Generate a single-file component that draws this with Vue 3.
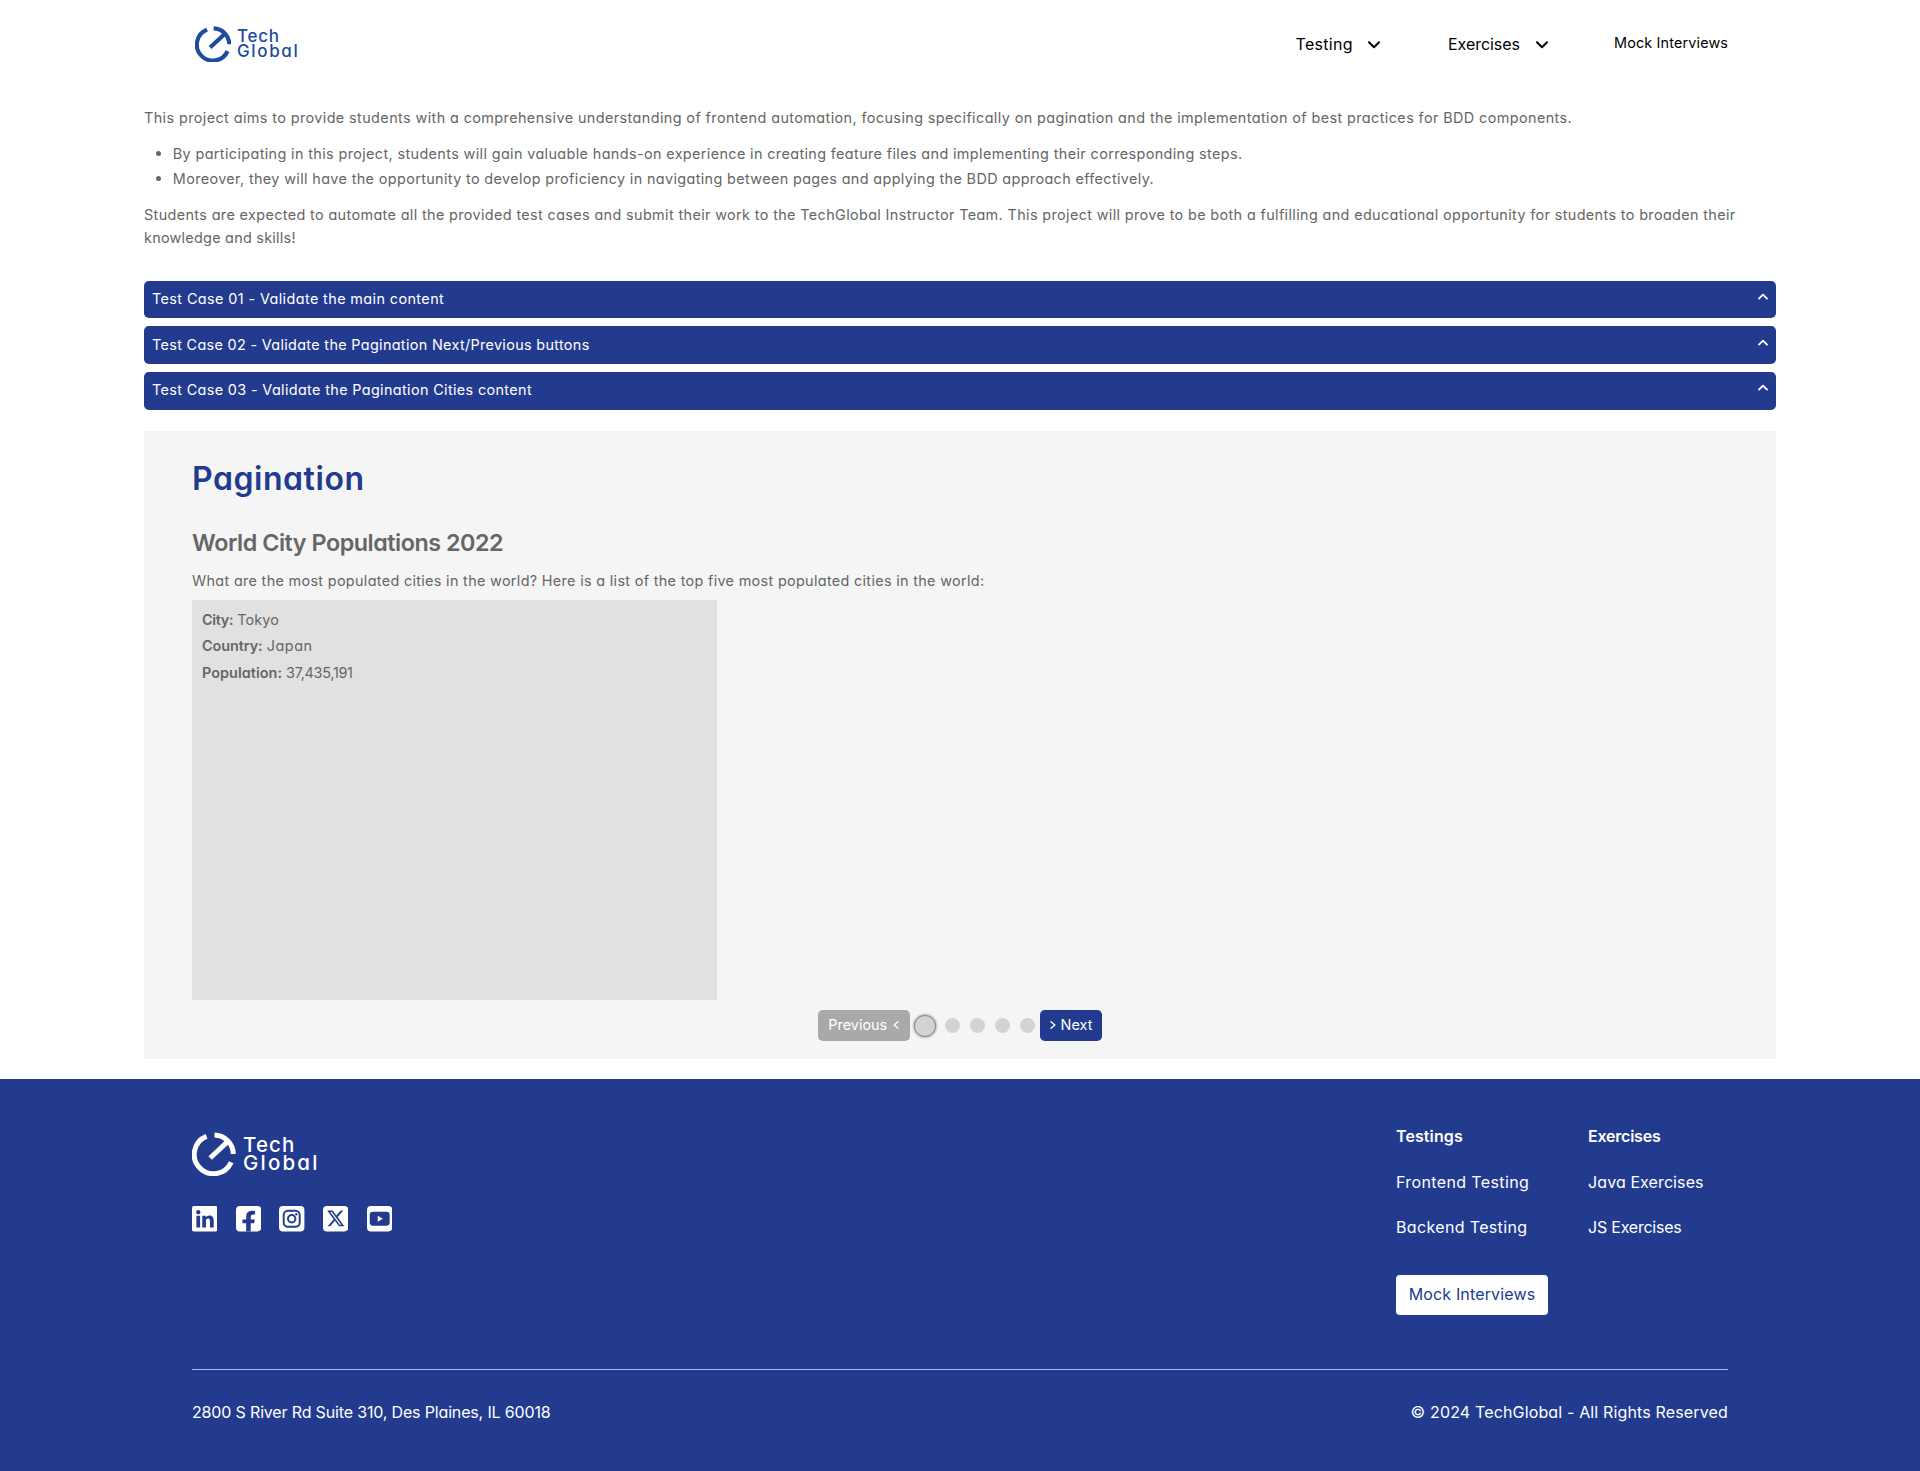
<script setup>
const cases = [
  { title: 'Test Case 01 - Validate the main content', ls: 0.4 },
  { title: 'Test Case 02 - Validate the Pagination Next/Previous buttons', ls: 0.33 },
  { title: 'Test Case 03 - Validate the Pagination Cities content', ls: 0.36 },
]
const facts = [
  { label: 'City:', value: 'Tokyo', a: -0.3, b: 0.1 },
  { label: 'Country:', value: 'Japan', a: -0.05, b: 0.55 },
  { label: 'Population:', value: '37,435,191', a: 0.05, b: -0.28 },
]
</script>

<template>
  <div class="page">
    <header class="header">
      <a class="logo">
        <svg class="mark" viewBox="0 0 44 44" fill="none" stroke="currentColor" stroke-width="5">
          <path d="M22.5 2.9A19.3 19.3 0 0 1 41.3 22" />
          <path d="M39.2 30.2A19.3 19.3 0 1 1 14.6 4.4" />
          <path d="M18.2 26L37 8.4" />
        </svg>
        <span class="wordmark"><span class="tech">Tech</span><span class="global">Global</span></span>
      </a>
      <nav class="nav">
        <div class="menu testing">
          <span>Testing</span>
          <svg viewBox="0 0 12 8"><path d="M1 1.3L6 6.3L11 1.3" /></svg>
        </div>
        <div class="menu exercises">
          <span>Exercises</span>
          <svg viewBox="0 0 12 8"><path d="M1 1.3L6 6.3L11 1.3" /></svg>
        </div>
        <a class="mock-link">Mock Interviews</a>
      </nav>
    </header>

    <main class="main">
      <section class="intro">
        <p class="aims">This project aims to provide students with a comprehensive understanding of frontend automation, focusing specifically on pagination and the implementation of best practices for BDD components.</p>
        <ul>
          <li>By participating in this project, students will gain valuable hands-on experience in creating feature files and implementing their corresponding steps.</li>
          <li class="second">Moreover, they will have the opportunity to develop proficiency in navigating between pages and applying the BDD approach effectively.</li>
        </ul>
        <p class="expected">Students are expected to automate all the provided test cases and submit their work to the TechGlobal Instructor Team. This project will prove to be both a fulfilling and educational opportunity for students to broaden their<br><span class="last">knowledge and skills!</span></p>
      </section>

      <section class="cases">
        <div v-for="c in cases" :key="c.title" class="case">
          <span :style="{ letterSpacing: c.ls + 'px' }">{{ c.title }}</span>
          <svg viewBox="0 0 10 7"><path d="M1 5.6L5 1.6L9 5.6" /></svg>
        </div>
      </section>

      <section class="panel">
        <h1>Pagination</h1>
        <h2>World City Populations 2022</h2>
        <p class="question">What are the most populated cities in the world? Here is a list of the top five most populated cities in the world:</p>
        <div class="city">
          <p v-for="f in facts" :key="f.label">
            <b :style="{ letterSpacing: f.a + 'px' }">{{ f.label }}</b>
            <span :style="{ letterSpacing: f.b + 'px' }">{{ f.value }}</span>
          </p>
        </div>
        <div class="pager">
          <button class="prev" disabled>Previous <svg viewBox="0 0 6 8"><path d="M5 .8L1.2 4L5 7.2" /></svg></button>
          <i class="dot active"></i>
          <i v-for="n in 4" :key="n" class="dot"></i>
          <button class="next"><svg viewBox="0 0 6 8"><path d="M1 .8L4.8 4L1 7.2" /></svg> Next</button>
        </div>
      </section>
    </main>

    <footer class="footer">
      <div class="top">
        <div class="brand">
          <a class="logo white">
            <svg class="mark" viewBox="0 0 44 44" fill="none" stroke="currentColor" stroke-width="5">
              <path d="M22.5 2.9A19.3 19.3 0 0 1 41.3 22" />
              <path d="M39.2 30.2A19.3 19.3 0 1 1 14.6 4.4" />
              <path d="M18.2 26L37 8.4" />
            </svg>
            <span class="wordmark"><span class="tech">Tech</span><span class="global">Global</span></span>
          </a>
          <div class="social">
            <svg viewBox="0 0 26 26">
              <rect width="26" height="26" rx="2" class="w" />
              <circle cx="6.4" cy="6.4" r="2.2" class="b" />
              <path class="b" d="M4.5 9.9h3.8V22H4.5zM10.5 9.9h3.6v1.7c.7-1.2 2-2 3.7-2 3.5 0 4.4 2.3 4.4 5.5V22h-3.8v-6.1c0-1.6-.1-3.1-1.9-3.1-1.9 0-2.2 1.5-2.2 3V22h-3.8z" />
            </svg>
            <svg viewBox="0 0 26 26">
              <rect width="26" height="26" rx="4" class="w" />
              <path class="b" d="M10.4 26v-8.3H6.6v-4h3.8v-2.4c0-4.4 2-6.5 6.3-6.5.8 0 2.2.2 2.8.3v3.6c-.3 0-.8-.1-1.5-.1-2.1 0-2.9.8-2.9 2.9v2.2h4.2l-.7 4h-3.5V26z" />
            </svg>
            <svg viewBox="0 0 26 26">
              <rect width="26" height="26" rx="4" class="w" />
              <rect x="4.8" y="4.8" width="16.4" height="16.4" rx="4.4" class="line" />
              <circle cx="13" cy="13" r="3.8" class="line" />
              <circle cx="17.7" cy="8.4" r="1.2" class="b" />
            </svg>
            <svg viewBox="0 0 26 26">
              <rect width="26" height="26" rx="4" class="w" />
              <path class="b" d="M18.2 4.7h2.6L15 11.2 21.8 20.7h-5.4l-4.2-5.6-4.8 5.6H4.8l6.1-7.1L4.3 4.7h5.5l3.8 5zM17.2 19.1h1.5L9 6.2H7.4z" />
            </svg>
            <svg viewBox="0 0 26 26">
              <rect width="26" height="26" rx="4" class="w" />
              <rect x="2.8" y="5.8" width="20.4" height="14.4" rx="3.2" class="b" />
              <path class="w" d="M11 9.9L16.2 13L11 16.1z" />
            </svg>
          </div>
        </div>
        <div class="columns">
          <div class="column">
            <b>Testings</b>
            <a class="frontend">Frontend Testing</a>
            <a class="backend">Backend Testing</a>
            <a class="mock">Mock Interviews</a>
          </div>
          <div class="column">
            <b class="tight">Exercises</b>
            <a>Java Exercises</a>
            <a class="tight">JS Exercises</a>
          </div>
        </div>
      </div>
      <div class="bottom">
        <span class="address">2800 S River Rd Suite 310, Des Plaines, IL 60018</span>
        <span class="rights">© 2024 TechGlobal - All Rights Reserved</span>
      </div>
    </footer>
  </div>
</template>

<style>
body { margin: 0; background: #fff; }
</style>

<style scoped>
.page {
  height: 1471px;
  overflow: hidden;
  display: flex;
  flex-direction: column;
  font-family: Inter, "Open Sans", sans-serif;
  font-feature-settings: "cv11";
  font-size: 14.4px;
  line-height: 21.6px;
  color: #666;
}
p, h1, h2, ul { margin: 0; padding: 0; }
.header {
  height: 87px;
  flex: none;
  padding: 0 192px 0 194.5px;
  display: flex;
  justify-content: space-between;
  align-items: center;
  box-sizing: border-box;
}
.logo { display: flex; align-items: center; gap: 6px; color: #1d4b9f; }
.header .logo { padding-top: 1px; }
.mark { width: 36.5px; height: 36.5px; }
.wordmark {
  display: flex;
  flex-direction: column;
  font-size: 17px;
  line-height: 15px;
  font-weight: 500;
}
.tech { letter-spacing: .75px; }
.global { letter-spacing: 1.65px; }
.nav { display: flex; align-items: center; color: #000; }
.menu { display: flex; align-items: center; font-size: 16px; line-height: 24px; }
.menu svg { width: 12px; height: 8px; margin-top: 2px; }
.menu path, .case path, .pager path { fill: none; stroke: currentColor; stroke-width: 2; stroke-linecap: round; stroke-linejoin: round; }
.testing span { width: 72.5px; letter-spacing: .3px; }
.exercises { margin-left: 68px; }
.exercises span { width: 88px; letter-spacing: -.05px; }
.mock-link { margin-left: 66px; width: 114px; letter-spacing: .15px; margin-top: -.6px; white-space: nowrap; }

.main { padding: 20.4px 144px 0; height: 972px; flex: none; box-sizing: border-box; }
.intro { height: 173.4px; white-space: nowrap; }
.aims { letter-spacing: .405px; }
ul { list-style: none; padding: 14.4px 0 14.4px 28.8px; display: flex; flex-direction: column; gap: 3.4px; }
li { letter-spacing: .375px; position: relative; }
li::before {
  content: "";
  position: absolute;
  left: -16.5px;
  top: 8px;
  width: 5px;
  height: 5px;
  border-radius: 50%;
  background: #666;
}
li.second { letter-spacing: .365px; }
.expected { letter-spacing: .369px; }
.last { letter-spacing: .26px; position: relative; top: .6px; }

.cases { display: flex; flex-direction: column; gap: 8px; }
.case {
  height: 37.6px;
  box-sizing: border-box;
  padding: 7.2px 8px 0;
  display: flex;
  justify-content: space-between;
  background: #233b8f;
  color: #fff;
  border-radius: 4.8px;
}
.case svg { width: 10px; height: 7px; margin-top: 5px; }
.case path { stroke-width: 1.8; }

.panel {
  margin-top: 21.3px;
  height: 628px;
  box-sizing: border-box;
  padding: 24.3px 48px 0;
  background: #f5f5f5;
}
h1 { font-size: 32px; line-height: 48px; font-weight: 600; color: #233b8f; letter-spacing: .55px; margin-bottom: 21.4px; }
h2 { font-size: 23.3px; line-height: 36px; font-weight: 600; letter-spacing: -.45px; margin-bottom: 9.2px; }
.question { letter-spacing: .325px; }
.city {
  margin-top: 8.4px;
  width: 525px;
  height: 400px;
  box-sizing: border-box;
  padding: 9px 10px;
  background: #e1e1e1;
  display: flex;
  flex-direction: column;
  gap: 5px;
}
.city p { display: flex; gap: 4px; }
b { font-weight: 600; }
.pager { display: flex; justify-content: center; align-items: center; margin-top: 10px; height: 31px; }
button {
  height: 31px;
  border: 0;
  padding: 0 0 1px;
  display: flex;
  align-items: center;
  justify-content: center;
  font: inherit;
  font-feature-settings: inherit;
  border-radius: 4.8px;
  color: #fff;
  background: #233b8f;
}
.prev { width: 92px; box-sizing: border-box; gap: 5.5px; background: #a9a9a9; letter-spacing: 0; margin-right: 4px; padding-right: 1px; }
.next { width: 62px; box-sizing: border-box; gap: 5px; letter-spacing: 0; }
.pager svg { width: 6px; height: 8px; }
.pager path { stroke-width: 1.4; }
.dot { width: 15px; height: 15px; margin: 0 5px; border-radius: 50%; background: #d3d3d3; }
.dot.active {
  width: 20px;
  height: 20px;
  margin: 1px 4px 0 0;
  border: 1px solid #8c8c8c;
  box-shadow: 0 0 3px #777;
}

.footer {
  margin-top: 20px;
  height: 392px;
  flex: none;
  box-sizing: border-box;
  padding: 0 192px;
  background: #233b8f;
  color: #fff;
  font-size: 16px;
  line-height: 24px;
}
.top { height: 290.4px; display: flex; justify-content: space-between; }
.brand { padding-top: 53px; }
.white { color: #fff; gap: 7px; }
.white .mark { width: 44px; height: 44px; }
.white .wordmark { font-size: 20.5px; line-height: 18.5px; }
.white .tech { letter-spacing: 1.1px; }
.white .global { letter-spacing: 2.2px; }
.social { display: flex; gap: 18.3px; margin-top: 30.3px; }
.social svg { width: 25.4px; height: 25.4px; }
.w { fill: #fff; }
.b { fill: #233b8f; }
.line { fill: none; stroke: #233b8f; stroke-width: 2; }
.columns { display: flex; padding-top: 45.3px; width: 332px; }
.column { width: 192px; flex: none; display: flex; flex-direction: column; align-items: flex-start; gap: 21.4px; letter-spacing: .1px; white-space: nowrap; }
.frontend { letter-spacing: .38px; }
.backend { letter-spacing: .35px; }
.tight { letter-spacing: -.22px; }
.mock {
  margin-top: 14.2px;
  width: 152px;
  height: 40px;
  line-height: 39px;
  border-radius: 4px;
  background: #fff;
  color: #233b8f;
  text-align: center;
  letter-spacing: .15px;
}
.bottom {
  border-top: 1px solid #afb8f0;
  padding-top: 29.4px;
  display: flex;
  justify-content: space-between;
}
.address { letter-spacing: -.16px; }
.rights { letter-spacing: .15px; }
</style>
